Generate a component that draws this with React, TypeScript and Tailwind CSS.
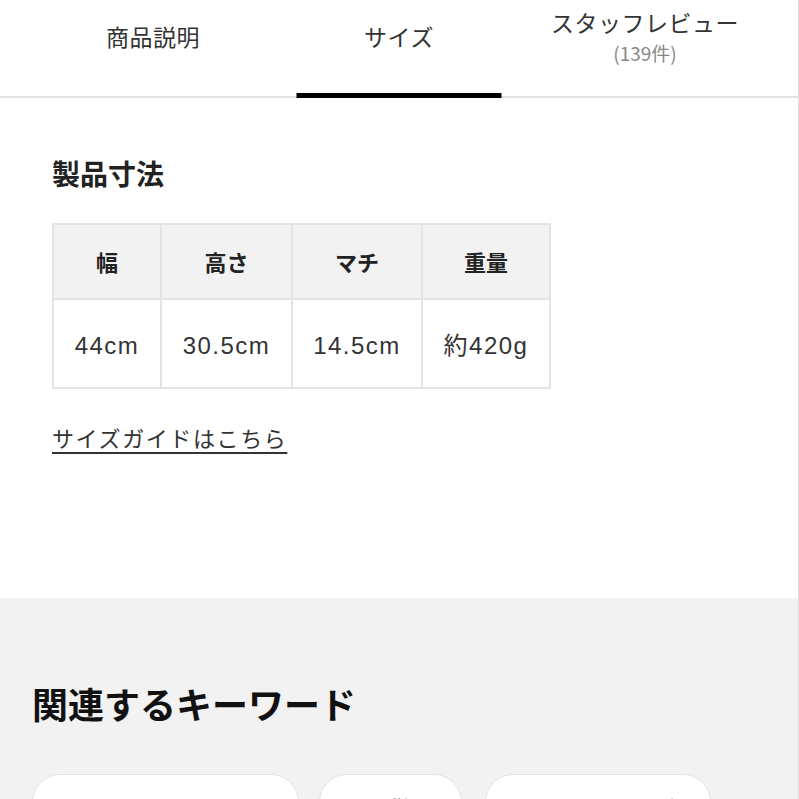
import React from 'react';

const tabs = [
  { label: '商品説明' },
  { label: 'サイズ', active: true },
  { label: 'スタッフレビュー', sub: '(139件)' },
];

const headers = ['幅', '高さ', 'マチ', '重量'];
const values = ['44cm', '30.5cm', '14.5cm', '約420g'];
const colWidths = ['w-[108px]', 'w-[131px]', 'w-[130px]', 'w-[128px]'];

const keywords = [
  { label: 'ビジネスリュック', w: 'w-[267px]' },
  { label: '通勤', w: 'w-[143px]' },
  { label: 'ボストンバッグ', w: 'w-[226px] ml-[3px]' },
];

export default function App() {
  return (
    <div
      className="w-[799px] h-[799px] overflow-hidden bg-white text-[#333]"
      style={{ fontFamily: '"Noto Sans CJK JP", "Noto Sans", sans-serif' }}
    >
      {/* Tabs */}
      <div className="border-r border-[#ddd]">
        <div className="grid grid-cols-3 px-[30px] h-[98px] border-b-2 border-[#e2e2e2]">
          {tabs.map((tab) => (
            <div key={tab.label} className="relative flex flex-col items-center">
              {tab.sub ? (
                <div className="flex flex-col items-center pt-[6px]">
                  <span className="text-[23px] leading-[32px] tracking-[0.5px] text-[#333]">{tab.label}</span>
                  <span className="text-[19px] leading-[30px] text-[#888]">{tab.sub}</span>
                </div>
              ) : (
                <span className="text-[23px] leading-[32px] pt-[20px] tracking-[0.5px] text-[#333]">{tab.label}</span>
              )}
              {tab.active && (
                <div className="absolute bottom-[-2px] left-1/2 -translate-x-1/2 w-[205px] h-[5px] bg-black" />
              )}
            </div>
          ))}
        </div>

        {/* Size section */}
        <div className="h-[500px] pl-[52px] pt-[57px]">
          <h2 className="text-[28px] font-bold leading-[36px] text-[#222]">製品寸法</h2>

          <table className="mt-[32px] border-collapse">
            <thead>
              <tr>
                {headers.map((h, i) => (
                  <th
                    key={h}
                    className={`${colWidths[i]} h-[75px] bg-[#f2f2f2] border-2 border-[#e4e4e4] text-[22px] font-bold text-[#222]`}
                  >
                    {h}
                  </th>
                ))}
              </tr>
            </thead>
            <tbody>
              <tr>
                {values.map((v, i) => (
                  <td
                    key={v}
                    className={`${colWidths[i]} h-[89px] pt-[4px] border-2 border-[#e4e4e4] text-center text-[24px] tracking-[1.5px] text-[#333]`}
                    style={{ fontFamily: '"Liberation Sans", "Noto Sans CJK JP", sans-serif' }}
                  >
                    {v}
                  </td>
                ))}
              </tr>
            </tbody>
          </table>

          <a
            href="#"
            className="inline-block mt-[33px] text-[22px] leading-[30px] tracking-[1.6px] text-[#333] underline underline-offset-[5px] decoration-[2px]"
          >
            サイズガイドはこちら
          </a>
        </div>
      </div>

      {/* Related keywords */}
      <div className="bg-[#f2f2f2] h-[201px] pl-[32px] pt-[82px] border-r border-[#ddd]">
        <h2 className="text-[36px] font-bold leading-[46px] text-[#111]">関連するキーワード</h2>
        <div className="flex gap-[20px] mt-[48px]">
          {keywords.map((k) => (
            <div
              key={k.label}
              className={`${k.w} h-[64px] shrink-0 rounded-[28px] bg-white border border-[#e3e3e3] flex items-start justify-center pt-[16px] text-[22px] text-[#333]`}
            >
              {k.label}
            </div>
          ))}
        </div>
      </div>
    </div>
  );
}
